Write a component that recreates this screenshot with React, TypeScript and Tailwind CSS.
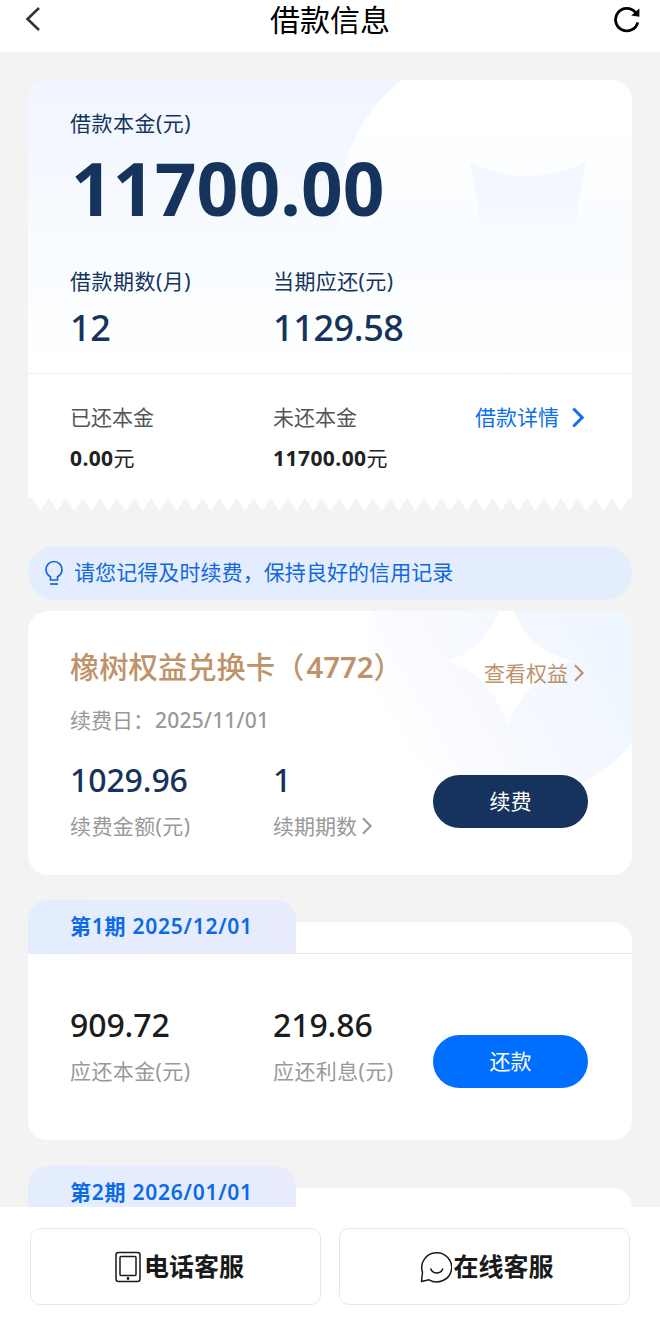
import React from 'react';

interface StatProps {
  value: string;
  label: string;
  className: string;
  arrow?: boolean;
}

interface Installment {
  index: number;
  date: string;
  bill?: { principal: string; interest: string };
}

const installments: Installment[] = [
  { index: 1, date: '2025/12/01', bill: { principal: '909.72', interest: '219.86' } },
  { index: 2, date: '2026/01/01' },
];

function Chevron({ className, width = 2.4 }: { className: string; width?: number }) {
  return (
    <svg viewBox="0 0 12 20" className={className} fill="none" stroke="currentColor" strokeWidth={width}>
      <path d="M1.5 1.5 10 10l-8.500 8.500" />
    </svg>
  );
}

function Header() {
  return (
    <header className="flex h-[52px] shrink-0 items-start justify-between bg-white pl-[25px] pr-[19px]">
      <svg viewBox="0 0 16 28" className="mt-[5px] h-[28px] w-[16px] text-[#333]" fill="none" stroke="currentColor" strokeWidth="2.600">
        <path d="M14 3 2.500 14 14 25" />
      </svg>
      <h1 className="pl-[6px] text-[30px] leading-[40px] text-black">借款信息</h1>
      <svg viewBox="0 0 28 28" className="mt-[5px] h-[28px] w-[28px] text-black" fill="none" stroke="currentColor" strokeWidth="2.800">
        <path d="M24.800 17.400A11.300 11.300 0 1 1 22.500 7.300" />
        <path d="M26.400 3.500v8.300l-8.200-1.200z" fill="currentColor" stroke="none" />
      </svg>
    </header>
  );
}

function SummaryArt() {
  return (
    <svg viewBox="0 0 604 293" className="absolute inset-0 h-full w-full">
      <defs>
        <linearGradient id="disc" gradientUnits="userSpaceOnUse" x1="0" y1="0" x2="0" y2="293">
          <stop offset="0.05" stopColor="#fff" />
          <stop offset="0.3" stopColor="#fdfeff" />
          <stop offset="0.6" stopColor="#f9fcff" stopOpacity="0.5" />
          <stop offset="0.75" stopColor="#fff" stopOpacity="0" />
        </linearGradient>
        <linearGradient id="cup" x1="0" y1="0" x2="0" y2="1">
          <stop offset="0" stopColor="#f3f6fe" />
          <stop offset="0.5" stopColor="#f5f9ff" />
          <stop offset="1" stopColor="#f9fcff" stopOpacity="0" />
        </linearGradient>
      </defs>
      <path d="M374 0Q311 50 311 135V293H604V0z" fill="url(#disc)" />
      <path d="M441 82Q499 110 558 82Q547 130 547 180H453Q453 124 441 82z" fill="url(#cup)" />
    </svg>
  );
}

function Zigzag() {
  const teeth = Array.from({ length: 35 }, (_, i) => 3.7 + i * 17.07);
  const points = teeth.map(x => `${x},0 ${x + 8.5},13`).join(' ');

  return (
    <svg viewBox="0 0 604 13" className="block h-[13px] w-full">
      <polygon points={`0,0 ${points} 601,0 604,0`} fill="#fff" />
    </svg>
  );
}

function Summary() {
  return (
    <section>
      <div className="relative h-[293px] overflow-hidden rounded-t-[20px] bg-linear-to-b from-[#f0f5ff] via-[#f7fbff] to-white">
        <SummaryArt />
        <div className="relative px-[42px] pt-[27px] text-[#15335c]">
          <p className="text-[21px] leading-[32px] tracking-[0.5px]">借款本金(元)</p>
          <p className="-mt-px ml-px text-[73px] leading-[100px] font-bold tracking-[0.1px]">11700.00</p>
          <div className="mt-[27px] flex">
            <div className="w-[203px]">
              <p className="text-[21px] leading-[32px] tracking-[0.5px]">借款期数(月)</p>
              <p className="mt-[5px] text-[36px] leading-[52px] font-medium tracking-[-0.4px]">12</p>
            </div>
            <div>
              <p className="text-[21px] leading-[32px] tracking-[0.4px]">当期应还(元)</p>
              <p className="mt-[5px] text-[36px] leading-[52px] font-medium tracking-[-0.4px]">1129.58</p>
            </div>
          </div>
        </div>
      </div>
      <div className="flex h-[125px] border-t border-[#efefef] bg-white px-[42px] pt-[27px] text-[21px]">
        <div className="w-[203px]">
          <p className="leading-[32px] text-[#555]">已还本金</p>
          <p className="mt-[9px] leading-[32px] tracking-[0.4px] text-[#222]"><b>0.00</b>元</p>
        </div>
        <div className="w-[202px]">
          <p className="leading-[32px] text-[#555]">未还本金</p>
          <p className="mt-[9px] leading-[32px] tracking-[0.45px] text-[#222]"><b>11700.00</b>元</p>
        </div>
        <a className="flex h-[33px] items-center text-[#0a70ee]">
          借款详情
          <Chevron className="mb-px ml-[12px] h-[21px] w-[14px]" width={2.8} />
        </a>
      </div>
      <Zigzag />
    </section>
  );
}

function Notice() {
  return (
    <div className="mt-[35px] flex h-[54px] items-center rounded-full bg-[#e4edfd] pl-[16px] text-[21px] text-[#1268dc]">
      <svg viewBox="0 0 20 28" className="mr-[10px] h-[28px] w-[20px]" fill="none" stroke="currentColor" strokeWidth="1.700">
        <path d="M6.500 21v-3.200C3.500 16 2 13.500 2 10.500a8 8 0 0 1 16 0c0 3-1.500 5.500-4.500 7.300v3.200z" />
        <path d="M6 25h8" />
      </svg>
      <span className="pb-[2px] leading-[52px] tracking-[0.08px]">请您记得及时续费，保持良好的信用记录</span>
    </div>
  );
}

function Stat({ value, label, className, arrow }: StatProps) {
  return (
    <div className="w-[203px]">
      <p className={`text-[32px] leading-[46px] font-medium tracking-[-0.1px] ${className}`}>{value}</p>
      <p className="flex items-center text-[21px] leading-[46px] text-[#999]">
        <span className={arrow ? '' : 'tracking-[0.4px]'}>{label}</span>
        {arrow && <Chevron className="ml-[4px] h-[18px] w-[12px]" />}
      </p>
    </div>
  );
}

function Benefit() {
  return (
    <section className="relative mt-[11px] h-[264px] overflow-hidden rounded-[20px] bg-white px-[42px] pt-[32px]">
      <svg viewBox="0 0 604 264" className="absolute inset-0 h-full w-full">
        <defs>
          <linearGradient id="glow" x1="0.1" y1="0.8" x2="0.95" y2="0.3">
            <stop offset="0" stopColor="#fff" />
            <stop offset="0.2" stopColor="#fafbff" />
            <stop offset="0.5" stopColor="#f4f8ff" />
            <stop offset="1" stopColor="#ecf5ff" />
          </linearGradient>
        </defs>
        <circle cx="487" cy="39" r="149" fill="url(#glow)" />
        <path d="M480-20C490 24 510 40 545 50C510 62 494 84 480 113C466 80 450 58 419 50C450 42 468 16 480-20z" fill="#fff" />
      </svg>
      <div className="relative">
        <div className="flex justify-between">
          <h2 className="text-[29.300px] leading-[48px] font-medium whitespace-nowrap text-[#bf936a]">
            橡树权益兑换卡（<span className="ml-[2px] font-semibold">4772</span>）
          </h2>
          <a className="mr-[5px] flex shrink-0 items-center pt-[12px] text-[21px] leading-[36px] text-[#bf936a]">
            查看权益
            <Chevron className="ml-[5px] h-[18px] w-[12px]" />
          </a>
        </div>
        <p className="mt-[13px] text-[21px] leading-[32px] text-[#999]">
          续费日：<span className="ml-px font-medium tracking-[0.2px]">2025/11/01</span>
        </p>
        <div className="mt-[21px] flex">
          <Stat value="1029.96" label="续费金额(元)" className="text-[#15335c]" />
          <Stat value="1" label="续期期数" className="text-[#15335c]" arrow />
          <button className="-ml-[43px] mt-[18px] h-[53px] w-[155px] shrink-0 rounded-full bg-[#15335c] text-[21px] text-white">续费</button>
        </div>
      </div>
    </section>
  );
}

function InstallmentCard({ item }: { item: Installment }) {
  return (
    <section className="mb-[26px]">
      <div className="flex items-end">
        <h3 className="h-[53px] w-[268px] rounded-t-[20px] bg-linear-to-r from-[#e3edfe] to-[#e8ecfc] pl-[42px] text-[21px] leading-[52px] font-semibold tracking-[0.75px] text-[#0a6ae8]">
          第{item.index}期 {item.date}
        </h3>
        <div className="h-[31px] flex-1 rounded-tr-[20px] bg-white" />
      </div>
      {item.bill && (
        <div className="flex h-[187px] rounded-b-[20px] border-t border-[#e6e8ec] bg-white px-[42px] pt-[48px]">
          <Stat value={item.bill.principal} label="应还本金(元)" className="text-[#1c1c1c]" />
          <Stat value={item.bill.interest} label="应还利息(元)" className="text-[#1c1c1c]" />
          <button className="-ml-[43px] mt-[33px] h-[53px] w-[155px] shrink-0 rounded-full bg-[#006eff] text-[21px] text-white">还款</button>
        </div>
      )}
    </section>
  );
}

function Footer() {
  return (
    <footer className="flex h-[120px] shrink-0 justify-between bg-white px-[30px] pt-[21px] text-[25px] font-bold text-[#1a1a1a]">
      <button className="flex h-[77px] w-[291px] items-center justify-center rounded-[10px] border-[1.500px] border-[#e8e8e8] pl-[8px]">
        <svg viewBox="0 0 26 32" className="mr-[3px] h-[32px] w-[26px]" fill="none" stroke="currentColor" strokeWidth="1.500">
          <rect x="1" y="1.500" width="24" height="29" rx="2.500" />
          <rect x="5" y="5.500" width="16" height="19" rx="1" />
          <circle cx="13" cy="27.500" r="1.400" fill="currentColor" stroke="none" />
        </svg>
        <span className="pt-px">电话客服</span>
      </button>
      <button className="flex h-[77px] w-[291px] items-center justify-center rounded-[10px] border-[1.500px] border-[#e8e8e8] pl-[5px]">
        <svg viewBox="0 0 32 32" className="mr-px h-[32px] w-[32px]" fill="none" stroke="currentColor" strokeWidth="1.500">
          <path d="M1.500 30.500l1-9.500A15 14.500 0 1 1 9 28.800z" strokeLinejoin="round" />
          <path d="M10.500 17.500c2.500 6 10 6 12.500 0" />
        </svg>
        <span className="pt-px">在线客服</span>
      </button>
    </footer>
  );
}

export default function App() {
  return (
    <div className="flex h-[1327px] w-[660px] flex-col overflow-hidden bg-[#f3f3f3] font-['Noto_Sans','Noto_Sans_CJK_SC',sans-serif]">
      <Header />
      <main className="min-h-0 flex-1 overflow-hidden px-[28px] pt-[28px]">
        <Summary />
        <Notice />
        <Benefit />
        <div className="mt-[25px]">
          {installments.map(item => (
            <InstallmentCard key={item.index} item={item} />
          ))}
        </div>
      </main>
      <Footer />
    </div>
  );
}
